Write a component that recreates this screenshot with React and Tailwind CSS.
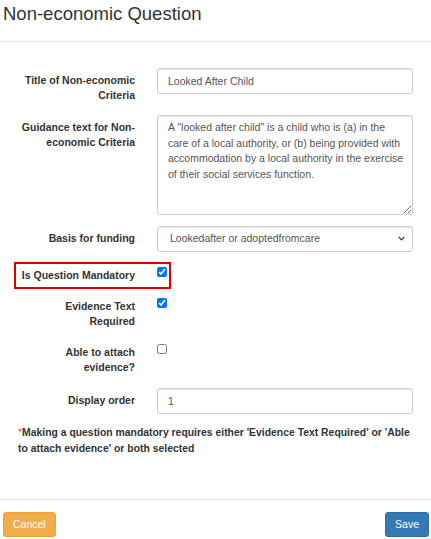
import { useState } from "react"

const guidance =
  'A "looked after child" is a child who is (a) in the care of a local authority, or (b) being provided with accommodation by a local authority in the exercise of their social services function.'

const Label = ({ children }) => (
  <div className="w-[146px] shrink-0 pr-[11px] pt-[5px] text-right text-[10.5px] font-bold leading-[15px] text-[#333]">
    {children}
  </div>
)

const Check = ({ checked, onChange }) => (
  <div className="pl-[11px] pt-[4px]">
    <input
      type="checkbox"
      checked={checked}
      onChange={onChange}
      className="m-0 block h-[10px] w-[10px]"
    />
  </div>
)

export default function App() {
  const [title, setTitle] = useState("Looked After Child")
  const [text, setText] = useState(guidance)
  const [mandatory, setMandatory] = useState(true)
  const [evidenceText, setEvidenceText] = useState(true)
  const [attach, setAttach] = useState(false)
  const [order, setOrder] = useState("1")

  const inputCls =
    "block h-[26px] w-[256px] rounded-[3px] border border-[#ccc] bg-white px-[10px] text-[10.5px] text-[#555] shadow-[inset_0_1px_1px_rgba(0,0,0,0.075)] outline-none font-[family-name:'Liberation_Sans',Arial,sans-serif]"

  return (
    <div className="flex h-[539px] w-[431px] flex-col bg-white font-[family-name:'Liberation_Sans',Arial,sans-serif]">
      <div className="h-[42px] shrink-0 border-b border-[#e5e5e5] px-[3px] pt-[2px]">
        <h4 className="text-[18.5px] font-normal leading-[24px] text-[#333]">Non-economic Question</h4>
      </div>

      <div className="flex-1 pt-[26px]">
        <div className="flex">
          <Label>
            Title of Non-economic
            <br />
            Criteria
          </Label>
          <div className="pl-[11px]">
            <input className={inputCls} value={title} onChange={(e) => setTitle(e.target.value)} />
          </div>
        </div>

        <div className="mt-[12px] flex">
          <Label>
            Guidance text for Non-
            <br />
            economic Criteria
          </Label>
          <div className="pl-[11px]">
            <textarea
              className="block h-[100px] w-[256px] rounded-[3px] border border-[#ccc] bg-white pl-[10px] pr-[6px] py-[4px] font-[family-name:'Liberation_Sans',Arial,sans-serif] text-[10.5px] leading-[15.5px] text-[#555] shadow-[inset_0_1px_1px_rgba(0,0,0,0.075)] outline-none"
              value={text}
              onChange={(e) => setText(e.target.value)}
            />
          </div>
        </div>

        <div className="mt-[11px] flex">
          <Label>Basis for funding</Label>
          <div className="relative pl-[11px]">
            <select className={`${inputCls} appearance-none pl-[12px]`} defaultValue="a">
              <option value="a">Lookedafter or adoptedfromcare</option>
            </select>
            <svg
              className="pointer-events-none absolute right-[8px] top-[10px]"
              width="7"
              height="5"
              viewBox="0 0 7 5"
            >
              <path d="M0.8 1 L3.5 3.8 L6.2 1" fill="none" stroke="#333" strokeWidth="1.2" />
            </svg>
          </div>
        </div>

        <div className="relative mt-[11px] flex">
          <div className="pointer-events-none absolute left-[14px] top-[-1px] h-[27px] w-[157px] border-2 border-[#e00000]" />
          <Label>Is Question Mandatory</Label>
          <Check checked={mandatory} onChange={(e) => setMandatory(e.target.checked)} />
        </div>

        <div className="mt-[11px] flex">
          <Label>
            Evidence Text
            <br />
            Required
          </Label>
          <Check checked={evidenceText} onChange={(e) => setEvidenceText(e.target.checked)} />
        </div>

        <div className="mt-[11px] flex">
          <Label>
            Able to attach
            <br />
            evidence?
          </Label>
          <Check checked={attach} onChange={(e) => setAttach(e.target.checked)} />
        </div>

        <div className="mt-[13px] flex">
          <Label>Display order</Label>
          <div className="pl-[11px]">
            <input className={inputCls} value={order} onChange={(e) => setOrder(e.target.value)} />
          </div>
        </div>

        <p className="mt-[11px] pl-[18px] pr-[10px] text-[10.4px] font-bold leading-[16px] text-[#333]">
          <span className="font-normal text-[#d9534f]">*</span>
          Making a question mandatory requires either 'Evidence Text Required' or 'Able to attach evidence' or
          both selected
        </p>
      </div>

      <div className="flex h-[40px] shrink-0 items-start justify-between border-t border-[#e5e5e5] pl-[3px] pr-[2px] pt-[12px]">
        <button className="h-[25px] rounded-[3px] border border-[#eea236] bg-[#f0ad4e] px-[9px] font-[family-name:'Liberation_Sans',Arial,sans-serif] text-[10.5px] text-white">
          Cancel
        </button>
        <button className="h-[25px] rounded-[3px] border border-[#2e6da4] bg-[#337ab7] px-[9px] font-[family-name:'Liberation_Sans',Arial,sans-serif] text-[10.5px] text-white">
          Save
        </button>
      </div>
    </div>
  )
}
